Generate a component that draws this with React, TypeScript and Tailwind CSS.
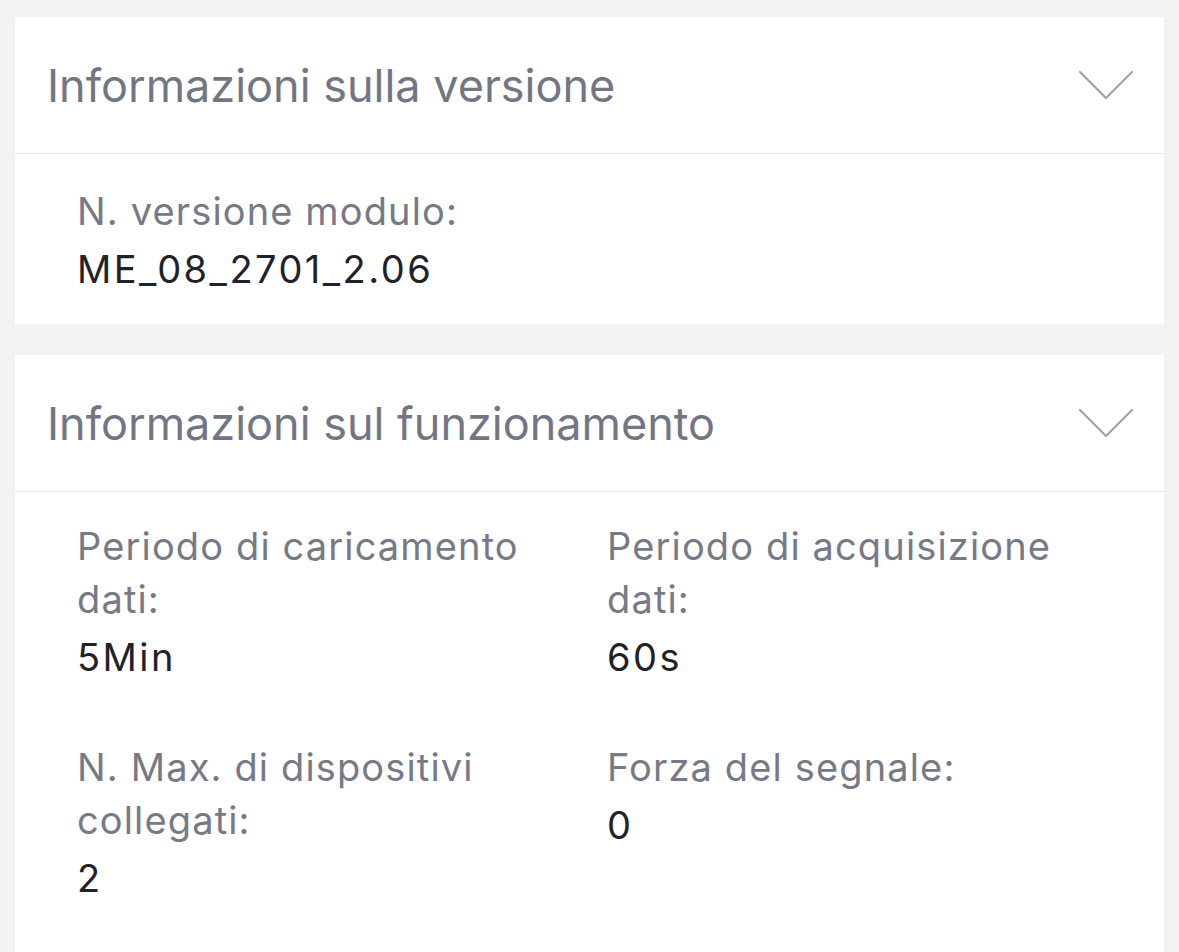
import React from "react";

type Field = { label: string; value: string };

function Chevron() {
  return (
    <svg width="56" height="32" viewBox="0 0 56 32" fill="none" className="shrink-0">
      <path d="M2 3 L28 29 L54 3" stroke="#a3a3a3" strokeWidth="2.2" strokeLinecap="round" strokeLinejoin="round" />
    </svg>
  );
}

function Section({ title, children }: { title: string; children: React.ReactNode }) {
  return (
    <section className="bg-white">
      <div className="flex h-[137px] items-center justify-between border-b border-[#e9e9e9] pl-[32px] pr-[30px]">
        <h2 className="text-[45px] leading-none text-[#717684]">{title}</h2>
        <Chevron />
      </div>
      {children}
    </section>
  );
}

function Item({ label, value }: Field) {
  return (
    <div>
      <div className="text-[38px] leading-[53px] tracking-[0.03em] text-[#757a86]">{label}</div>
      <div className="mt-[5px] text-[38px] leading-[53px] tracking-[0.065em] text-[#1f2229]">{value}</div>
    </div>
  );
}

export default function App() {
  const ops: Field[] = [
    { label: "Periodo di caricamento dati:", value: "5Min" },
    { label: "Periodo di acquisizione dati:", value: "60s" },
    { label: "N. Max. di dispositivi collegati:", value: "2" },
    { label: "Forza del segnale:", value: "0" },
  ];

  return (
    <div
      className="min-h-screen overflow-hidden bg-[#f2f2f2] px-[15px] pt-[17px]"
      style={{ fontFamily: "Inter, 'Noto Sans', sans-serif" }}
    >
      <div className="flex flex-col gap-[31px]">
        <Section title="Informazioni sulla versione">
          <div className="pb-[28px] pl-[62px] pr-[32px] pt-[31px]">
            <Item label="N. versione modulo:" value="ME_08_2701_2.06" />
          </div>
        </Section>
        <Section title="Informazioni sul funzionamento">
          <div className="grid grid-cols-[530px_1fr] gap-y-[57px] pb-[80px] pl-[62px] pr-[32px] pt-[28px]">
            {ops.map((f) => (
              <div key={f.label} className="max-w-[470px]">
                <Item label={f.label} value={f.value} />
              </div>
            ))}
          </div>
        </Section>
      </div>
    </div>
  );
}
